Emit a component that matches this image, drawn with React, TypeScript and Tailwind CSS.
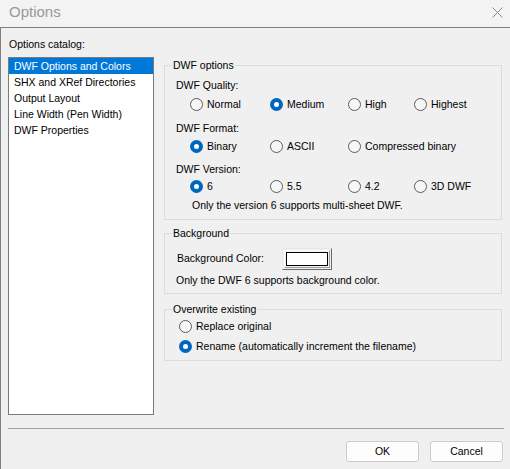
import React from "react";

const CATALOG = [
  "DWF Options and Colors",
  "SHX and XRef Directories",
  "Output Layout",
  "Line Width (Pen Width)",
  "DWF Properties",
];

function Radio({ label, checked = false }: { label: string; checked?: boolean }) {
  return (
    <div className="flex items-center h-[17px]">
      {checked ? (
        <span className="w-[13px] h-[13px] rounded-full bg-[#0067c0] flex items-center justify-center shrink-0">
          <span className="w-[5px] h-[5px] rounded-full bg-white" />
        </span>
      ) : (
        <span className="w-[13px] h-[13px] rounded-full border border-[#5c5c5c] bg-[#f7f7f7] shrink-0" />
      )}
      <span className="ml-[4px] whitespace-nowrap">{label}</span>
    </div>
  );
}

function Group({ title, children, className = "" }: { title: string; children: React.ReactNode; className?: string }) {
  return (
    <fieldset className={`border border-[#dcdcdc] pl-[7px] pr-[7px] ${className}`}>
      <legend className="px-[1px] leading-[13px]">{title}</legend>
      {children}
    </fieldset>
  );
}

export default function App() {
  return (
    <div
      className="w-[510px] h-[469px] flex flex-col bg-[#f0f0f0] text-[10.5px] text-black overflow-hidden"
      style={{ fontFamily: '"Liberation Sans", Arial, sans-serif' }}
    >
      <div className="h-[28px] shrink-0 bg-[#f3f3f3] border-b border-[#808080] flex items-center justify-between pl-[9px] pr-[7px] pb-[3px]">
        <span className="text-[15px] text-[#999999]">Options</span>
        <svg width="11" height="11" viewBox="0 0 11 11" className="mt-[1px]">
          <path d="M0.5 0.5 L10.5 10.5 M10.5 0.5 L0.5 10.5" stroke="#8a8a8a" strokeWidth="1" fill="none" />
        </svg>
      </div>

      <div className="flex-1 border-l border-[#808080] pl-[7px] pr-[6px]">
        <div className="pt-[10px] leading-[13px] ml-[1px]">Options catalog:</div>

        <div className="flex items-start mt-[6px]">
          <div className="w-[146px] h-[358px] border border-[#7a7a7a] bg-white shrink-0">
            {CATALOG.map((item, i) => (
              <div
                key={item}
                className={`h-[16px] leading-[16px] pl-[5px] whitespace-nowrap ${
                  i === 0 ? "bg-[#0078d7] text-white" : ""
                }`}
              >
                {item}
              </div>
            ))}
          </div>

          <div className="ml-[10px] w-[338px] mt-[2px] flex flex-col">
            <Group title="DWF options" className="pb-[7px]">
              <div className="mt-[7px] leading-[13px] ml-[4px]">DWF Quality:</div>
              <div className="mt-[4px] ml-[18px] grid grid-cols-[80px_78px_66px_auto]">
                <Radio label="Normal" />
                <Radio label="Medium" checked />
                <Radio label="High" />
                <Radio label="Highest" />
              </div>
              <div className="mt-[9px] leading-[13px] ml-[4px]">DWF Format:</div>
              <div className="mt-[3px] ml-[18px] grid grid-cols-[80px_78px_auto]">
                <Radio label="Binary" checked />
                <Radio label="ASCII" />
                <Radio label="Compressed binary" />
              </div>
              <div className="mt-[8px] leading-[13px] ml-[4px]">DWF Version:</div>
              <div className="mt-[2px] ml-[18px] grid grid-cols-[80px_78px_66px_auto]">
                <Radio label="6" checked />
                <Radio label="5.5" />
                <Radio label="4.2" />
                <Radio label="3D DWF" />
              </div>
              <div className="mt-[4px] leading-[13px] ml-[20px]">Only the version 6 supports multi-sheet DWF.</div>
            </Group>

            <Group title="Background" className="mt-[7px] pb-[6px]">
              <div className="mt-[8px] flex items-center h-[22px]">
                <span className="ml-[5px] w-[105px]">Background Color:</span>
                <div className="w-[50px] h-[22px] border border-t-[#e8e8e8] border-l-[#e8e8e8] border-r-[#696969] border-b-[#696969] bg-[#f0f0f0] p-[1px]">
                  <div className="w-full h-full border border-t-white border-l-white border-r-[#a0a0a0] border-b-[#a0a0a0] p-[1px]">
                    <div className="w-full h-full border border-black bg-white" />
                  </div>
                </div>
              </div>
              <div className="mt-[4px] leading-[13px] ml-[4px]">Only the DWF 6 supports background color.</div>
            </Group>

            <Group title="Overwrite existing" className="mt-[9px] pb-[5px]">
              <div className="mt-[2px] ml-[7px]">
                <Radio label="Replace original" />
              </div>
              <div className="mt-[3px] ml-[7px]">
                <Radio label="Rename (automatically increment the filename)" checked />
              </div>
            </Group>
          </div>
        </div>

        <div className="mt-[13px] h-px bg-[#a0a0a0] w-[496px]" />

        <div className="mt-[12px] flex justify-end gap-[11px] pr-[1px]">
          <button className="w-[73px] h-[21px] bg-[#fdfdfd] border border-[#cccccc] rounded-[3px] leading-none">
            OK
          </button>
          <button className="w-[73px] h-[21px] bg-[#fdfdfd] border border-[#cccccc] rounded-[3px] leading-none">
            Cancel
          </button>
        </div>
      </div>
    </div>
  );
}
